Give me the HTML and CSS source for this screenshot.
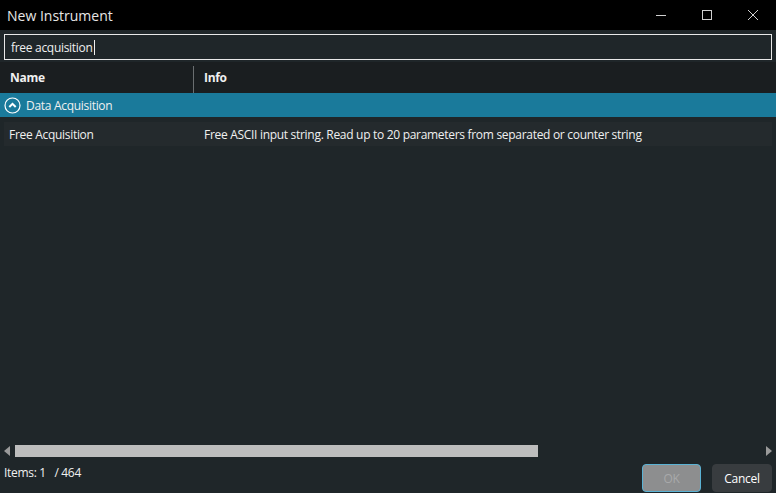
FILE: index.html
```html
<!DOCTYPE html>
<html>
<head>
<meta charset="utf-8">
<link rel="stylesheet" href="styles.css">
</head>
<body>
<div class="window">
  <div class="titlebar">
    <div class="title">New Instrument</div>
    <div class="controls">
      <div class="ctl"><svg width="12" height="12" viewBox="0 0 12 12"><path d="M1 6.5H11" stroke="#d0d0d0" stroke-width="1"/></svg></div>
      <div class="ctl"><svg width="12" height="12" viewBox="0 0 12 12"><rect x="1.5" y="1.5" width="9" height="9" fill="none" stroke="#d0d0d0" stroke-width="1"/></svg></div>
      <div class="ctl"><svg width="12" height="12" viewBox="0 0 12 12"><path d="M1 1L11 11M11 1L1 11" stroke="#d0d0d0" stroke-width="1"/></svg></div>
    </div>
  </div>
  <div class="search"><span class="search-text">free acquisition</span><span class="caret"></span></div>
  <div class="grid">
    <div class="header">
      <div class="col-name">Name</div>
      <div class="sep"></div>
      <div class="col-info">Info</div>
    </div>
    <div class="group">
      <svg class="group-icon" width="17" height="17" viewBox="0 0 17 17"><circle cx="8.5" cy="8.5" r="7.5" fill="none" stroke="#ffffff" stroke-width="1.2"/><path d="M5.3 10L8.5 6.8L11.7 10" fill="none" stroke="#ffffff" stroke-width="2"/></svg>
      <span>Data Acquisition</span>
    </div>
    <div class="row">
      <div class="cell-name">Free Acquisition</div>
      <div class="cell-info">Free ASCII input string. Read up to 20 parameters from separated or counter string</div>
    </div>
    <div class="empty"></div>
    <div class="hscroll">
      <div class="arrow-left"></div>
      <div class="track"><div class="thumb"></div></div>
      <div class="arrow-right"></div>
    </div>
  </div>
  <div class="footer">
    <div class="items">Items: 1&nbsp;&nbsp;&nbsp;/ 464</div>
    <div class="buttons">
      <button class="btn ok">OK</button>
      <button class="btn cancel">Cancel</button>
    </div>
  </div>
</div>
</body>
</html>
```
FILE: styles.css
```css
html, body {
  margin: 0;
  padding: 0;
  background: #1f2629;
}
body {
  font-family: "Open Sans", "Noto Sans", sans-serif;
  font-size: 12px;
  letter-spacing: -0.3px;
  color: #f0f0f0;
}
.window {
  width: 776px;
  height: 493px;
  display: flex;
  flex-direction: column;
  background: #1f2629;
  overflow: hidden;
}
.titlebar {
  height: 30px;
  background: #000000;
  display: flex;
  align-items: center;
  justify-content: space-between;
  flex-shrink: 0;
}
.title {
  padding-left: 7px;
  font-size: 14px;
  letter-spacing: 0;
  color: #e6e6e6;
}
.controls {
  display: flex;
  height: 30px;
}
.ctl {
  width: 46px;
  height: 30px;
  display: flex;
  align-items: center;
  justify-content: center;
}
.search {
  margin: 4px 4px 0 4px;
  height: 24px;
  border: 1px solid #e8e8e8;
  background: #1f2629;
  display: flex;
  align-items: center;
  padding-left: 6px;
  flex-shrink: 0;
}
.search-text {
  font-size: 12px;
  color: #f0f0f0;
}
.caret {
  width: 1px;
  height: 15px;
  background: #f0f0f0;
  margin-left: 1px;
}
.grid {
  margin-top: 2px;
  flex: 1;
  display: flex;
  flex-direction: column;
}
.header {
  height: 31px;
  background: #1a1e20;
  display: flex;
  align-items: center;
}
.col-name {
  width: 183px;
  padding-left: 10px;
  font-weight: bold;
}
.sep {
  width: 1px;
  height: 27px;
  align-self: flex-end;
  background: #6a6e70;
}
.col-info {
  padding-left: 10px;
  font-weight: bold;
}
.group {
  height: 24px;
  background: #1a7a9b;
  display: flex;
  align-items: center;
  padding-left: 4px;
  gap: 5px;
}
.group-icon {
  display: block;
}
.row {
  margin: 5px 4px 0 4px;
  height: 24px;
  background: #242a2d;
  display: flex;
  align-items: center;
}
.cell-name {
  width: 195px;
  padding-left: 5px;
}
.cell-info {
  padding-left: 0;
}
.empty {
  flex: 1;
}
.hscroll {
  height: 12px;
  display: flex;
  align-items: center;
  margin: 0 4px 0 4px;
}
.arrow-left {
  width: 0;
  height: 0;
  border-top: 5px solid transparent;
  border-bottom: 5px solid transparent;
  border-right: 6px solid #9a9a9a;
}
.track {
  flex: 1;
  height: 12px;
  padding: 0 5px;
}
.thumb {
  width: 523px;
  height: 12px;
  background: #bdbdbd;
}
.arrow-right {
  width: 0;
  height: 0;
  border-top: 5px solid transparent;
  border-bottom: 5px solid transparent;
  border-left: 6px solid #9a9a9a;
}
.footer {
  height: 36px;
  display: flex;
  justify-content: space-between;
  align-items: flex-start;
  padding: 0 4px 0 4px;
  flex-shrink: 0;
}
.items {
  margin-top: 7px;
  font-size: 12px;
}
.buttons {
  display: flex;
  gap: 11px;
  margin-top: 7px;
}
.btn {
  font-family: "Open Sans", "Noto Sans", sans-serif;
  font-size: 12px;
  letter-spacing: -0.3px;
  height: 28px;
  border-radius: 4px;
  padding: 0;
}
.ok {
  width: 59px;
  background: #8d8e8f;
  border: 1px solid #5ab2d4;
  color: #a8a9aa;
}
.cancel {
  width: 60px;
  background: #383c3f;
  border: 1px solid #383c3f;
  color: #ffffff;
}
```
